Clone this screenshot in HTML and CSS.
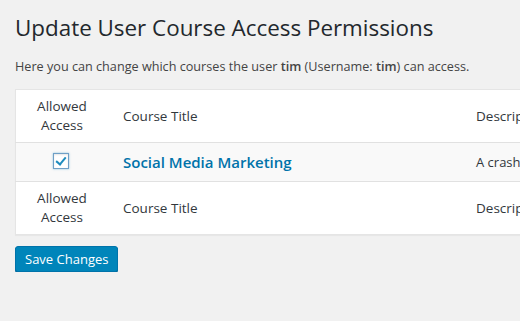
FILE: index.html
```html
<!DOCTYPE html>
<html lang="en">
<head>
    <meta charset="UTF-8">
    <title>Update User Course Access Permissions</title>
    <link rel="stylesheet" href="styles.css">
</head>
<body>
    <div class="wrap">
        <h1>Update User Course Access Permissions</h1>
        <p class="intro">Here you can change which courses the user <strong>tim</strong> (Username: <strong>tim</strong>) can access.</p>
        <form>
            <div class="tableBox">
                <table class="courses">
                    <thead>
                        <tr>
                            <th class="colAccess">Allowed<br>Access</th>
                            <th class="colTitle">Course Title</th>
                            <th class="colDesc">Description</th>
                        </tr>
                    </thead>
                    <tbody>
                        <tr class="alt">
                            <td class="colAccess"><span class="checkBox checked"></span></td>
                            <td class="colTitle"><a class="rowTitle" href="#">Social Media Marketing</a></td>
                            <td class="colDesc">A crash course in social media</td>
                        </tr>
                    </tbody>
                    <tfoot>
                        <tr>
                            <th class="colAccess">Allowed<br>Access</th>
                            <th class="colTitle">Course Title</th>
                            <th class="colDesc">Description</th>
                        </tr>
                    </tfoot>
                </table>
            </div>
            <button type="button" class="saveBtn">Save Changes</button>
        </form>
    </div>
</body>
</html>
```

FILE: styles.css
```css
html, body {
    margin: 0;
    padding: 0;
    overflow: hidden;
}

body {
    background-color: #f1f1f1;
    color: #444;
    font-family: 'Open Sans', sans-serif;
    font-size: 13px;
}

.wrap {
    padding: 9px 0 0 15px;
}

h1 {
    margin: 0;
    padding: 4px 0 0;
    font-size: 22.4px;
    font-weight: 400;
    line-height: 29px;
    color: #23282d;
}

.intro {
    margin: 15px 0 13px;
    font-size: 12.65px;
    line-height: 19px;
    color: #444;
}

.intro strong {
    font-weight: 600;
}

.tableBox {
    width: 620px;
}

.courses {
    width: 100%;
    border-collapse: collapse;
    background: #fff;
    border: 1px solid #e5e5e5;
    box-shadow: 0 1px 1px rgba(0, 0, 0, 0.04);
    table-layout: fixed;
}

.courses th, .courses td {
    font-weight: 400;
    text-align: left;
    color: #32373c;
    vertical-align: middle;
}

.courses th {
    font-size: 13.5px;
    line-height: 19px;
    padding: 7px 10px;
}

.courses thead tr th {
    border-bottom: 1px solid #e1e1e1;
    height: 38px;
}

.courses tfoot tr th {
    border-top: 1px solid #e1e1e1;
    height: 38px;
}

.courses td {
    font-size: 13px;
    padding: 9px 10px;
    height: 18px;
}

.courses .colAccess {
    width: 72px;
    text-align: center;
}

.courses .colTitle {
    padding-left: 15px;
}

.courses .colDesc {
    width: 148px;
    white-space: nowrap;
    overflow: hidden;
}

.courses tr.alt td {
    background-color: #f9f9f9;
}

.rowTitle {
    color: #0073aa;
    font-weight: 600;
    font-size: 15px;
    text-decoration: none;
}

.checkBox {
    display: inline-block;
    width: 14px;
    height: 14px;
    margin: -6px 0 0 -2px;
    border: 1px solid #6f9fc6;
    background: #fff;
    box-shadow: inset 0 1px 2px rgba(0, 0, 0, 0.1), 0 0 2px rgba(30, 140, 190, 0.5);
    vertical-align: middle;
    position: relative;
}

.checkBox.checked::after {
    content: "";
    position: absolute;
    left: 4px;
    top: 1px;
    width: 4px;
    height: 8px;
    border-right: 2.5px solid #1e8cbe;
    border-bottom: 2.5px solid #1e8cbe;
    transform: rotate(40deg);
}

.saveBtn {
    display: block;
    margin-top: 11px;
    background: #0085ba;
    border: 1px solid #0073aa;
    border-radius: 3px;
    box-shadow: 0 1px 0 #006799;
    color: #fff;
    font-family: 'Open Sans', sans-serif;
    font-size: 13px;
    line-height: 24px;
    height: 26px;
    padding: 0 9px;
    cursor: pointer;
}
```
